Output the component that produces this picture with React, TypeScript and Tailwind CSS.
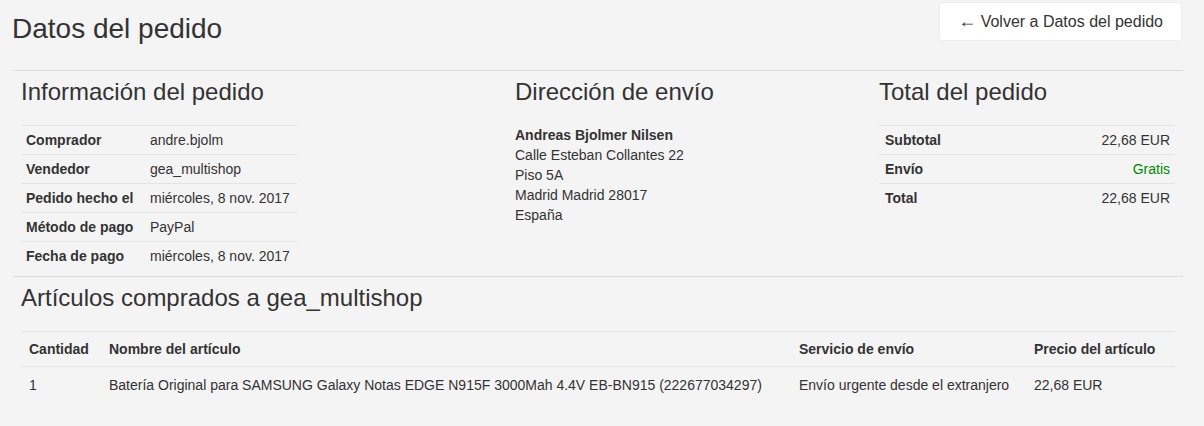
const infoRows = [
  ['Comprador', 'andre.bjolm'],
  ['Vendedor', 'gea_multishop'],
  ['Pedido hecho el', 'miércoles, 8 nov. 2017'],
  ['Método de pago', 'PayPal'],
  ['Fecha de pago', 'miércoles, 8 nov. 2017'],
];

const totalRows = [
  { label: 'Subtotal', value: '22,68 EUR', green: false },
  { label: 'Envío', value: 'Gratis', green: true },
  { label: 'Total', value: '22,68 EUR', green: false },
];

const SectionTitle = ({ children }: { children: React.ReactNode }) => (
  <h3 className="mt-[8px] mb-[20px] text-[24px] leading-[26px] font-normal text-[#333]">{children}</h3>
);

export default function App() {
  return (
    <div className="min-h-[426px] w-full bg-[#f4f4f4] pl-[12px] pr-[21px] font-['Liberation_Sans',Arial,sans-serif] text-[14px] leading-[20px] text-[#333]">
      <div className="flex h-[70px] items-start justify-between">
        <h2 className="mt-[14px] text-[28px] leading-[30px] font-normal">Datos del pedido</h2>
        <button className="mt-[2px] mr-[1px] h-[39px] rounded-[3px] border border-[#ececec] bg-white px-[18px] text-[16px] text-[#333]">
          <span className="text-[18px]">←</span> Volver a Datos del pedido
        </button>
      </div>
      <div className="ml-[1px] border-t border-[#dcdcdc]" />

      <div className="ml-[1px] flex">
        <div className="w-[494px] px-[8px]">
          <SectionTitle>Información del pedido</SectionTitle>
          <table className="w-[276px] border-collapse">
            <tbody>
              {infoRows.map(([k, v]) => (
                <tr key={k} className="border-t border-[#e4e4e4]">
                  <td className="w-[129px] py-[4px] pl-[5px] pr-[4px] font-bold whitespace-nowrap">{k}</td>
                  <td className="py-[4px] px-[0px] whitespace-nowrap">{v}</td>
                </tr>
              ))}
            </tbody>
          </table>
        </div>
        <div className="w-[364px] px-[8px]">
          <SectionTitle>Dirección de envío</SectionTitle>
          <div className="font-bold">Andreas Bjolmer Nilsen</div>
          <div>Calle Esteban Collantes 22</div>
          <div>Piso 5A</div>
          <div>Madrid Madrid 28017</div>
          <div>España</div>
        </div>
        <div className="w-[312px] px-[8px]">
          <SectionTitle>Total del pedido</SectionTitle>
          <table className="w-full border-collapse">
            <tbody>
              {totalRows.map(r => (
                <tr key={r.label} className="border-t border-[#e4e4e4]">
                  <td className="py-[4px] pl-[6px] font-bold">{r.label}</td>
                  <td className={`py-[4px] pr-[5px] text-right ${r.green ? 'text-[#008a00]' : ''}`}>{r.value}</td>
                </tr>
              ))}
            </tbody>
          </table>
        </div>
      </div>

      <div className="mt-[6px] ml-[1px] border-t border-[#dcdcdc]" />
      <div className="ml-[1px] px-[8px]">
        <SectionTitle>Artículos comprados a gea_multishop</SectionTitle>
        <table className="w-full border-collapse text-left">
          <thead>
            <tr className="border-t border-b border-[#e4e4e4]">
              <th className="w-[80px] py-[7px] pl-[8px] font-bold">Cantidad</th>
              <th className="w-[690px] py-[7px] pl-[8px] font-bold">Nombre del artículo</th>
              <th className="w-[235px] py-[7px] pl-[8px] font-bold">Servicio de envío</th>
              <th className="py-[7px] pl-[8px] font-bold">Precio del artículo</th>
            </tr>
          </thead>
          <tbody>
            <tr>
              <td className="pt-[8px] pb-[6px] pl-[8px]">1</td>
              <td className="pt-[8px] pb-[6px] pl-[8px] whitespace-nowrap">
                Batería Original para SAMSUNG Galaxy Notas EDGE N915F 3000Mah 4.4V EB-BN915 (222677034297)
              </td>
              <td className="pt-[8px] pb-[6px] pl-[8px] whitespace-nowrap">Envío urgente desde el extranjero</td>
              <td className="pt-[8px] pb-[6px] pl-[8px]">22,68 EUR</td>
            </tr>
          </tbody>
        </table>
      </div>
    </div>
  );
}
